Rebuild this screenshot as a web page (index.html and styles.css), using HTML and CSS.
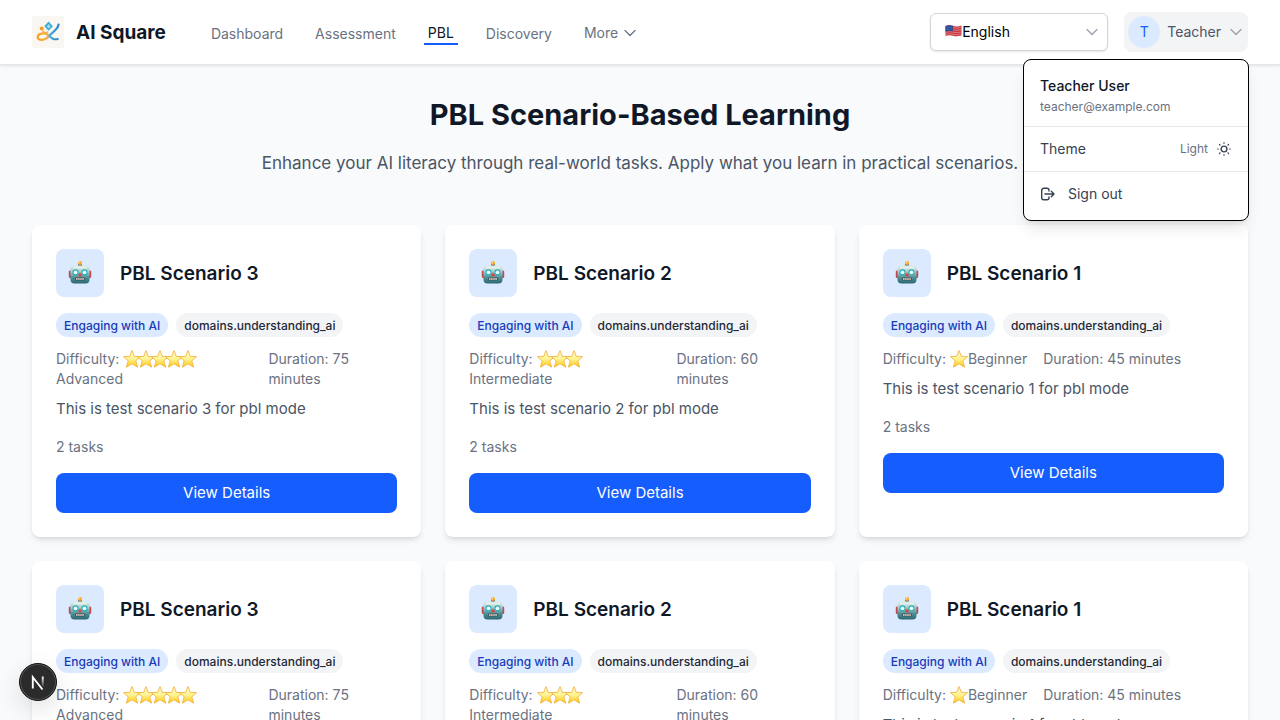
FILE: index.html
```html
<!DOCTYPE html>
<html lang="en">
<head>
<meta charset="utf-8">
<meta name="viewport" content="width=device-width, initial-scale=1">
<title>AI Square</title>
<link rel="stylesheet" href="styles.css">
</head>
<body>
<svg class="sprite" aria-hidden="true">
  <defs>
    <linearGradient id="gold" x1="0" y1="0" x2="0" y2="1"><stop offset="0" stop-color="#fff8c8"/><stop offset=".5" stop-color="#fff394"/><stop offset="1" stop-color="#fdc60b"/></linearGradient>
    <linearGradient id="steel" x1="0" y1="0" x2="0" y2="1"><stop offset="0" stop-color="#dcece8"/><stop offset=".35" stop-color="#a9cbcb"/><stop offset=".65" stop-color="#4f9298"/><stop offset="1" stop-color="#286773"/></linearGradient>
    <linearGradient id="ribbon" x1="0" y1="0" x2="1" y2="0"><stop offset="0" stop-color="#f8a01c"/><stop offset=".45" stop-color="#f5b34b"/><stop offset=".6" stop-color="#48a9dd"/><stop offset="1" stop-color="#2d86cc"/></linearGradient>
    <linearGradient id="fade" x1="0" y1="0" x2="0" y2="1"><stop offset="0" stop-color="#fff"/><stop offset="1" stop-color="#fff" stop-opacity="0"/></linearGradient>
    <symbol id="star" viewBox="0 0 18 18"><path d="M9 .5 11.300 6.300 17.600 6.700 12.800 10.800 14.600 17.200 9 13.800 3.400 17.200 5.200 10.800 .4 6.700 6.700 6.300Z" fill="url(#gold)" stroke="#f1ae35" stroke-width=".8" stroke-linejoin="round"/></symbol>
    <symbol id="chevron" viewBox="0 0 16 16"><path d="m3 5.500 5 5 5-5" fill="none" stroke="currentColor" stroke-width="1.300" stroke-linecap="round" stroke-linejoin="round"/></symbol>
    <symbol id="robot" viewBox="0 0 24 24">
      <rect x="10.200" y="2.600" width="3.600" height="3" rx=".6" fill="#4c5f86"/>
      <circle cx="12" cy="2" r="2" fill="#f7ac25"/><circle cx="11.600" cy="1.400" r=".8" fill="#ffe28a"/>
      <rect x=".8" y="9.500" width="3" height="7.500" rx="1.200" fill="#bd4b52"/><rect x="20.200" y="9.500" width="3" height="7.500" rx="1.200" fill="#bd4b52"/>
      <path d="M5.500 4.600h13q3 0 3 3.200v10.800q0 4-4 4h-11q-4 0-4-4V7.800Q2.500 4.600 5.500 4.600Z" fill="url(#steel)"/>
      <path d="M5 5.600h14v2H5z" fill="#eff6ef" opacity=".7"/>
      <circle cx="7.500" cy="11.300" r="3.100" fill="#28aebd"/><circle cx="16.500" cy="11.300" r="3.100" fill="#28aebd"/>
      <circle cx="7.500" cy="11.300" r="1.900" fill="#e9ffff"/><circle cx="16.500" cy="11.300" r="1.900" fill="#e9ffff"/>
      <path d="m12 11.300 2.200 4H9.800z" fill="#e0413c"/>
      <rect x="7" y="16.600" width="10" height="3" rx="1" fill="#41545c"/><path d="M8 18.100h8" stroke="#f0d9c8" stroke-width="1.500" stroke-dasharray="1.600 .5"/>
    </symbol>
  </defs>
</svg>

<header class="topbar">
  <a class="brand" href="#">
    <svg class="brand-mark" viewBox="0 0 32 32" aria-hidden="true">
      <rect width="32" height="32" fill="#faf6f1"/>
      <path d="M16.500 5.500 21 10.200l-4.500 4.500-4.200-4.500Z" fill="#3fadd2"/><path d="m16.700 8 1.900 2.400-2 2.200-1.800-2.200Z" fill="#a8dded"/>
      <circle cx="9.700" cy="12.600" r="2" fill="#f59c24"/>
      <path d="M26.500 8.500C26 14 20 16 16.500 20.500c-3 4-10.800 4.500-10.800.8 0-4.200 7.300-5.200 11-1.800 3 2.700 5 4.500 9 3.500" fill="none" stroke="url(#ribbon)" stroke-width="2.200" stroke-linecap="round"/>
      <path d="M10.500 14.500q1.300 3.500 5.700 1.500" fill="none" stroke="#f4ae43" stroke-width="1.600"/>
    </svg>
    <span>AI Square</span>
  </a>
  <nav class="nav" aria-label="Main">
    <a href="#">Dashboard</a>
    <a href="#">Assessment</a>
    <a class="active" href="#" aria-current="page">PBL</a>
    <a href="#">Discovery</a>
    <button type="button">More <svg class="chevron"><use href="#chevron"/></svg></button>
  </nav>
  <div class="actions">
    <div class="language">
      <svg class="flag" viewBox="0 0 17 14" aria-hidden="true">
        <path d="M.5 2Q4 .5 8 1.800t8.500-.3v10Q12 13 8 11.800T.5 12Z" fill="#c9353f"/>
        <path d="M7 3.600q5 1 9.500 0M7 5.800q5 1 9.500 0M.5 8.200q4-1 8 0t8-.2M.5 10.300q4-1 8 0t8-.2" fill="none" stroke="#e39a9f" stroke-width=".7"/>
        <path d="M.5 2Q4 .5 7.800 1.700v5.600Q4 6.400.5 7.500Z" fill="#24478f"/>
        <path d="M1.700 3.200h5M1.700 5.200h5" stroke="#a9b8d8" stroke-width=".6" stroke-dasharray=".7 .8"/>
      </svg>
      <select aria-label="Language"><option>English</option></select>
      <svg class="chevron language-chevron"><use href="#chevron"/></svg>
    </div>
    <div class="account">
      <button class="account-button" type="button" aria-expanded="true">
        <span class="avatar">T</span><span>Teacher</span><svg class="chevron muted"><use href="#chevron"/></svg>
      </button>
      <div class="menu">
        <div class="menu-user"><p class="user-name">Teacher User</p><p class="user-email">teacher@example.com</p></div>
        <button class="menu-row theme-row" type="button">
          <span>Theme</span>
          <span class="theme-value">Light
            <svg class="icon" viewBox="0 0 16 16" fill="none" stroke="#364153" stroke-width="1.200" stroke-linecap="round"><circle cx="8" cy="8" r="2.900" stroke-width="1.400"/><path d="M8 1.700v.6M8 13.700v.6M1.700 8h.6M13.700 8h.6M3.500 3.500l.5.5M12 12l.5.5M3.500 12.500 4 12M12 4l.5-.5"/></svg>
          </span>
        </button>
        <button class="menu-row signout-row" type="button">
          <svg class="icon" viewBox="0 0 16 16" fill="none" stroke="currentColor" stroke-width="1.400" stroke-linecap="round" stroke-linejoin="round"><path d="M11.300 5.300 14 8l-2.700 2.700M14 8H5M9 5V4.300a2 2 0 0 0-2-2H3.700a2 2 0 0 0-2 2v7.400a2 2 0 0 0 2 2H7a2 2 0 0 0 2-2V11"/></svg>
          <span>Sign out</span>
        </button>
      </div>
    </div>
  </div>
</header>

<main class="page">
  <h1>PBL Scenario-Based Learning</h1>
  <p class="lead">Enhance your AI literacy through real-world tasks. Apply what you learn in practical scenarios.</p>
  <div class="cards" id="cards"></div>
</main>

<button class="dev-badge" type="button" aria-label="Developer tools">
  <svg viewBox="0 0 36 36" aria-hidden="true"><path d="M12.800 24.500V13.200L22.500 25.500" fill="none" stroke="#fff" stroke-width="1.900"/><path d="M21.800 12.500h1.900v11h-1.900z" fill="url(#fade)"/></svg>
</button>
<script src="cards.js"></script>
</body>
</html>
```
FILE: styles.css
```css
* { box-sizing: border-box; }
body { margin: 0; background: #f9fafb; color: #101828; font: 15px/24px Inter, "Noto Sans", sans-serif; }
html { scrollbar-width: none; }
h1, h2, p { margin: 0; }
a { color: inherit; text-decoration: none; }
button, select { font: inherit; color: inherit; border: 0; background: none; padding: 0; cursor: pointer; }
svg { flex: none; }
.sprite { position: absolute; width: 0; height: 0; }
.icon, .chevron { width: 16px; height: 16px; }
.muted { color: #99a1af; }

.topbar { display: flex; align-items: center; height: 65px; padding: 0 32px; background: #fff; border-bottom: 1px solid #e5e7eb; box-shadow: 0 1px 3px rgba(0, 0, 0, .1); position: relative; z-index: 2; }
.brand { display: flex; align-items: center; gap: 12px; font-size: 19px; line-height: 28px; font-weight: 700; }
.brand span { padding-top: 2px; }
.brand-mark { width: 32px; height: 32px; }
.nav { display: flex; align-items: center; gap: 24px; margin-left: 41px; padding-top: 4px; font-size: 14px; line-height: 20px; color: #6a7282; }
.nav a, .nav button { padding: 0 4px; }
.nav button { display: flex; align-items: center; gap: 4px; padding-bottom: 2px; }
.nav .active { color: #101828; border-bottom: 2px solid #155dfc; }
.actions { display: flex; align-items: center; gap: 16px; margin-left: auto; }
.language { position: relative; width: 178px; }
.language select { display: block; appearance: none; width: 100%; height: 38px; padding: 0 32px 0 31px; border: 1px solid #d1d5dc; border-radius: 6px; background: #fff; color: #000; font-size: 14px; line-height: 20px; box-shadow: 0 1px 2px rgba(0, 0, 0, .1); }
.flag { position: absolute; left: 15px; top: 11px; width: 17px; height: 14px; }
.language-chevron { position: absolute; right: 8px; top: 11px; color: #99a1af; pointer-events: none; }
.account { position: relative; }
.account-button { display: flex; align-items: center; gap: 7px; padding: 4px; background: #f3f4f6; border-radius: 8px; color: #4a5565; font-size: 14px; line-height: 20px; }
.avatar { width: 32px; height: 32px; border-radius: 50%; background: #dbeafe; color: #155dfc; line-height: 32px; text-align: center; }

.menu { position: absolute; right: -1px; top: calc(100% + 7px); width: 226px; background: #fff; border: 1px solid #000; border-radius: 8px; box-shadow: 0 10px 15px -3px rgba(0, 0, 0, .1), 0 4px 6px -4px rgba(0, 0, 0, .1); font-size: 14px; line-height: 20px; color: #364153; }
.menu-user { padding: 16px 16px 11px; }
.user-name { color: #101828; font-weight: 500; }
.user-email { padding-top: 3px; font-size: 12px; line-height: 16px; color: #6a7282; }
.menu-row { display: flex; align-items: center; width: 100%; padding: 12px 16px; border-top: 1px solid #e5e7eb; }
.theme-row { justify-content: space-between; }
.theme-value { display: flex; align-items: center; gap: 8px; font-size: 12px; color: #6a7282; }
.signout-row { gap: 12px; padding-bottom: 16px; }

.page { padding: 32px; }
h1 { font-size: 29px; line-height: 36px; font-weight: 700; text-align: center; }
.lead { margin-top: 16px; font-size: 17px; line-height: 28px; color: #4a5565; text-align: center; }
.cards { display: grid; grid-template-columns: repeat(3, 1fr); gap: 24px; margin-top: 48px; }
.card { padding: 24px; background: #fff; border-radius: 8px; box-shadow: 0 4px 6px -1px rgba(0, 0, 0, .1), 0 2px 4px -2px rgba(0, 0, 0, .1); }
.card-head { display: flex; align-items: center; gap: 16px; }
.card-icon { display: flex; align-items: center; justify-content: center; width: 48px; height: 48px; border-radius: 8px; background: #dbeafe; }
.card-icon svg { width: 24px; height: 24px; }
.card h2 { padding-top: 2px; font-size: 19px; line-height: 28px; font-weight: 600; }
.tags { display: flex; flex-wrap: wrap; gap: 8px; margin-top: 16px; }
.tag { padding: 5px 8px 3px; border-radius: 12px; background: #f3f4f6; color: #1e2939; font-size: 12px; line-height: 16px; font-weight: 500; }
.tag-blue { background: #dbeafe; color: #193cb8; }
.meta { display: flex; gap: 16px; margin-top: 12px; }
.meta, .tasks { font-size: 14px; line-height: 20px; color: #6a7282; }
.stars { display: inline-flex; height: 18px; margin: -4px 0; vertical-align: -4px; }
.star { width: 18px; height: 18px; }
.star + .star { margin-left: -4px; }
.summary { margin-top: 8px; color: #4a5565; }
.tasks { margin-top: 16px; }
.details { display: block; width: 100%; margin-top: 16px; padding: 8px 16px; border-radius: 8px; background: #155dfc; color: #fff; }

.dev-badge { position: fixed; left: 19px; bottom: 19px; width: 38px; height: 38px; border-radius: 50%; background: #2b2b2b; border: 1px solid #111; box-shadow: inset 0 0 0 1px #555, 0 8px 24px rgba(0, 0, 0, .12); }
.dev-badge svg { display: block; width: 36px; height: 36px; }
```
FILE: cards.js
```js
const scenarios = [
  { id: 3, stars: 5, level: "Advanced", minutes: 75 },
  { id: 2, stars: 3, level: "Intermediate", minutes: 60 },
  { id: 1, stars: 1, level: "Beginner", minutes: 45 },
];

const star = '<svg class="star" aria-hidden="true"><use href="#star"/></svg>';

const renderCard = (s) => `
  <article class="card">
    <div class="card-head">
      <div class="card-icon"><svg aria-hidden="true"><use href="#robot"/></svg></div>
      <h2>PBL Scenario ${s.id}</h2>
    </div>
    <div class="tags"><span class="tag tag-blue">Engaging with AI</span><span class="tag">domains.understanding_ai</span></div>
    <div class="meta">
      <span>Difficulty: <span class="stars">${star.repeat(s.stars)}</span>${s.level}</span>
      <span>Duration: ${s.minutes} minutes</span>
    </div>
    <p class="summary">This is test scenario ${s.id} for pbl mode</p>
    <p class="tasks">2 tasks</p>
    <button class="details" type="button">View Details</button>
  </article>`;

document.getElementById("cards").innerHTML = [...scenarios, ...scenarios].map(renderCard).join("");
```
